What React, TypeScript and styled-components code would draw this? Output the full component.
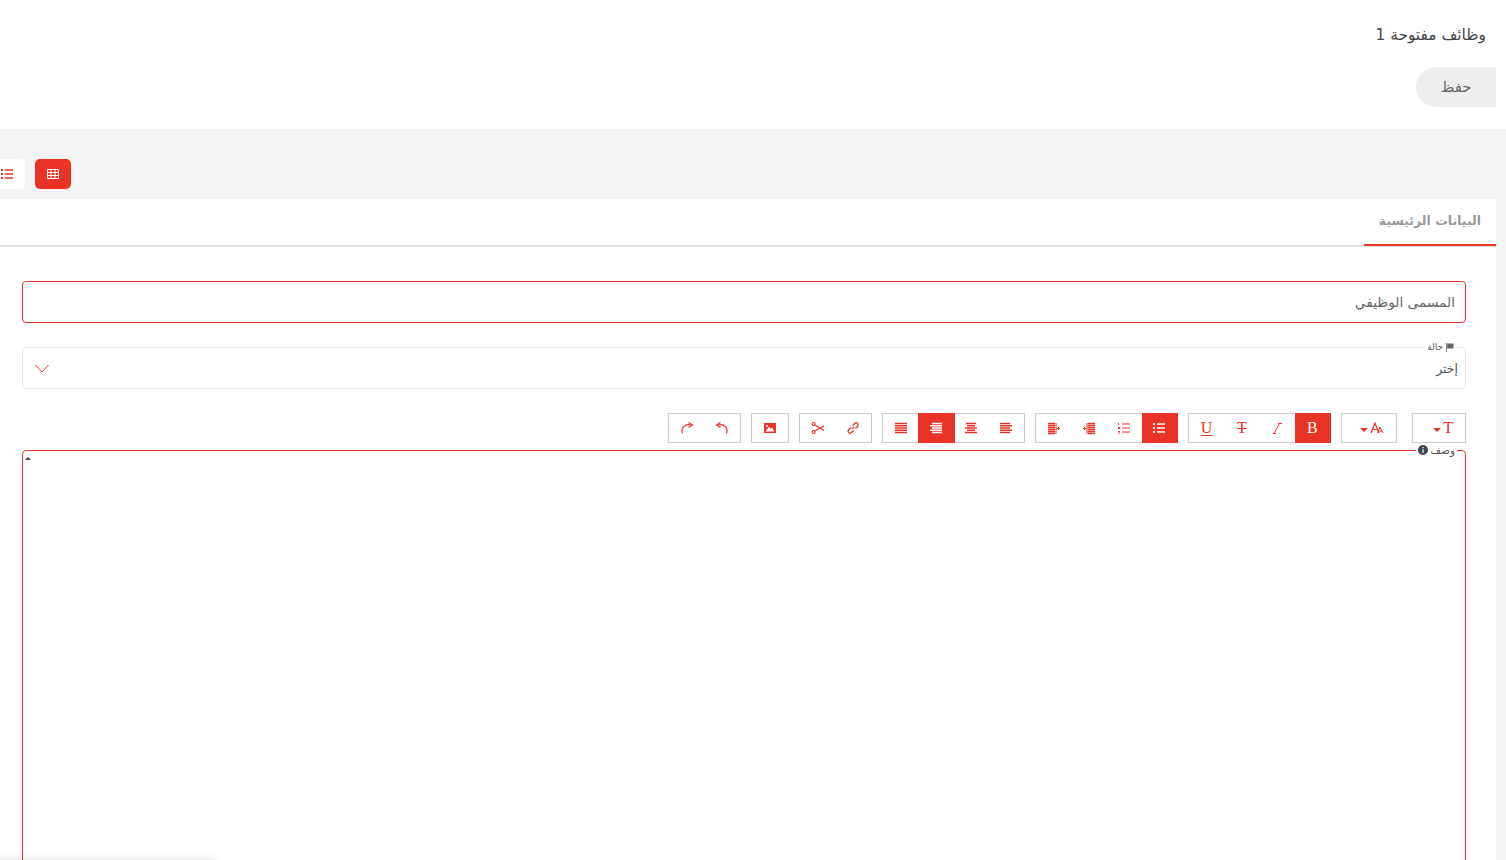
import React, { FunctionComponent, ReactNode } from 'react';
import styled, { createGlobalStyle } from 'styled-components';

const RED = '#ea3327';
const FONT = '"DejaVu Sans", "Noto Sans", sans-serif';

const GlobalStyle = createGlobalStyle`
	html, body {
		margin: 0;
		height: 100%;
		overflow: hidden;
		background: #f4f4f4;
	}
	* {
		box-sizing: border-box;
	}
`;

const Page = styled.div`
	direction: rtl;
	height: 860px;
	overflow: hidden;
	position: relative;
	font-family: ${FONT};
	color: #555;
`;

const Header = styled.header`
	background: #fff;
	height: 129px;
	padding: 25px 10px 0 0;
	display: flex;
	flex-direction: column;
	align-items: flex-start;
`;

const Title = styled.h1`
	margin: 0 10px 0 0;
	font-size: 15.4px;
	line-height: 21px;
	font-weight: 400;
	color: #444;
`;

const SaveButton = styled.button`
	margin-top: 21px;
	width: 80px;
	height: 40px;
	border: 0;
	border-radius: 20px 0 0 20px;
	background: #eee;
	color: #666;
	font-family: ${FONT};
	font-size: 15px;
	padding: 0;
`;

const ViewBar = styled.div`
	direction: ltr;
	height: 70px;
	padding-top: 30px;
	margin-left: -11px;
	display: flex;
	gap: 10px;
	align-items: flex-start;
`;

const ViewButton = styled.button<{ $active?: boolean }>`
	width: 36px;
	height: 30px;
	border: 0;
	padding: 0;
	border-radius: 5px;
	display: flex;
	align-items: center;
	justify-content: center;
	background: ${p => (p.$active ? RED : '#fff')};
	color: ${p => (p.$active ? '#fff' : RED)};
`;

const Card = styled.section`
	background: #fff;
	margin-right: 10px;
	height: 661px;
`;

const Tabs = styled.div`
	height: 48px;
	border-bottom: 2px solid #e0e0e0;
	display: flex;
`;

const Tab = styled.div`
	width: 132px;
	height: 47px;
	border-bottom: 2px solid ${RED};
	padding: 10px 15px 0 0;
	font-size: 12.5px;
	line-height: 24px;
	font-weight: 700;
	color: #999;
	white-space: nowrap;
`;

const Form = styled.div`
	padding: 34px 30px 0 22px;
	display: flex;
	flex-direction: column;
`;

const TextInput = styled.input`
	display: block;
	width: 100%;
	height: 42px;
	border: 1px solid ${RED};
	border-radius: 4px;
	padding: 0 10px;
	font-family: ${FONT};
	font-size: 13.7px;
	outline: none;
	background: #fff;
	&::placeholder {
		color: #666;
		opacity: 1;
	}
`;

const SelectBox = styled.div`
	position: relative;
	margin-top: 24px;
	height: 42px;
	border: 1px solid #e4e4e4;
	border-radius: 4px;
	padding: 0 7px 0 12px;
	display: flex;
	align-items: center;
	justify-content: space-between;
	font-size: 12.5px;
	color: #555;
`;

const ChevronSlot = styled.span`
	display: flex;
`;

const FloatLabel = styled.span<{ $top: number; $right: number; $size: number }>`
	position: absolute;
	top: ${p => p.$top}px;
	right: ${p => p.$right}px;
	padding: 0 2px;
	background: #fff;
	display: flex;
	align-items: center;
	gap: 2px;
	font-size: ${p => p.$size}px;
	line-height: 10px;
	color: #555;
`;

const EditorBar = styled.div`
	margin-top: 24px;
	display: flex;
	gap: 10px;
`;

const ToolGroup = styled.div`
	display: flex;
	height: 30px;
	border: 1px solid #ccc;
	background: #fff;
`;

const FontSizeGroup = styled(ToolGroup)`
	margin-left: 5px;
`;

const ToolButton = styled.button<{ $active?: boolean; $width?: number }>`
	width: ${p => p.$width ?? 35.25}px;
	height: 28px;
	border: 0;
	padding: 0;
	display: flex;
	align-items: center;
	justify-content: center;
	background: ${p => (p.$active ? RED : 'transparent')};
	color: ${p => (p.$active ? '#fff' : RED)};
	box-shadow: ${p =>
		p.$active
			? `0 -1px 0 ${RED}, 0 1px 0 ${RED}, 1px 0 0 ${RED}, 1px -1px 0 ${RED}, 1px 1px 0 ${RED}`
			: 'none'};
`;

const DropButton = styled(ToolButton)`
	direction: ltr;
	justify-content: flex-end;
	gap: 2px;
	padding-right: 12px;
`;

const Letter = styled.span<{ $deco?: string }>`
	font-family: 'Liberation Serif', serif;
	font-size: 16px;
	line-height: 16px;
	text-decoration: ${p => p.$deco ?? 'none'};
	text-decoration-thickness: 1px;
	text-underline-offset: 2px;
`;

const Caret = styled.span`
	width: 0;
	height: 0;
	margin-top: 3px;
	border-left: 4px solid transparent;
	border-right: 4px solid transparent;
	border-top: 4px solid ${RED};
`;

const Editor = styled.div`
	position: relative;
	margin-top: 7px;
	height: 500px;
	border: 1px solid ${RED};
	border-radius: 4px 4px 0 0;
`;

const ResizeCaret = styled.span`
	position: absolute;
	top: 6px;
	left: 2px;
	width: 0;
	height: 0;
	border-left: 3px solid transparent;
	border-right: 3px solid transparent;
	border-bottom: 3px solid #3d4452;
`;

const BottomShadow = styled.div`
	position: absolute;
	left: -10px;
	bottom: -20px;
	width: 225px;
	height: 20px;
	box-shadow: 0 0 8px rgba(0, 0, 0, 0.14);
`;

/* small icon drawings, 14x14 box */
const Svg: FunctionComponent<{ children: ReactNode; size?: number }> = ({ children, size = 14 }) => (
	<svg width={size} height={size} viewBox='0 0 14 14' fill='none' stroke='currentColor' strokeWidth='1'>
		{children}
	</svg>
);

const Rows: FunctionComponent<{ rows: [number, number][] }> = ({ rows }) => (
	<Svg>
		{rows.map(([from, to], i) => (
			<path key={i} d={`M${from} ${2.5 + i * 2.25}H${to}`} strokeWidth='1.5' />
		))}
	</Svg>
);

const AlignJustify = () => <Rows rows={[[1, 13], [1, 13], [1, 13], [1, 13], [1, 13]]} />;
const AlignRight = () => <Rows rows={[[3, 13], [1, 13], [3, 13], [1, 13], [3, 13]]} />;
const AlignCenter = () => <Rows rows={[[2, 12], [3, 11], [1, 13], [3, 11], [1, 13]]} />;
const AlignLeft = () => <Rows rows={[[1, 11], [1, 13], [1, 11], [1, 13], [1, 11]]} />;

const ListBullet = () => (
	<Svg>
		<path d='M5 3H13M5 7H13M5 11H13' strokeWidth='1.4' />
		<path d='M1 3H3M1 7H3M1 11H3' strokeWidth='1.8' />
	</Svg>
);

const ListNumber = () => (
	<Svg>
		<path d='M5 3H13M5 7H13M5 11H13' strokeWidth='1.2' />
		<path d='M1.5 2V4M1 6.5H3V7.5H1V8M1 10.5H3M1 12H3' strokeWidth='0.9' />
	</Svg>
);

const IndentLeft = () => (
	<Svg>
		<path d='M1 2.5H8M1 4.5H8M1 6.5H8M1 8.5H8M1 10.5H8M1 12.5H8' strokeWidth='1.3' />
		<path d='M9 2V13' />
		<path d='M9 7.5H13M11.5 6V9' />
	</Svg>
);

const IndentRight = () => (
	<Svg>
		<path d='M6 2.5H13M6 4.5H13M6 6.5H13M6 8.5H13M6 10.5H13M6 12.5H13' strokeWidth='1.3' />
		<path d='M5 2V13' />
		<path d='M1 7.5H5M2.5 6V9' />
	</Svg>
);

const Italic = () => (
	<Svg>
		<path d='M4 12.5L9.5 2.5M3 12.5H6M8 2.5H12' />
	</Svg>
);

const FontSizeIcon = () => <Letter>T</Letter>;

const FontAIcon = () => (
	<Svg>
		<path d='M1 12L5 2L9 12M2.5 8.5H7.5' strokeWidth='1.2' />
		<path d='M7.5 12L10 6L13 12M8.5 10H12' />
	</Svg>
);

const Picture = () => (
	<Svg>
		<path
			d='M1 2H13V12H1Z M2.5 10.5H11.5L9 6.5L7.5 8L6 5.5Z M4 4a1 1 0 1 0 .01 0Z'
			fill='currentColor'
			stroke='none'
			fillRule='evenodd'
		/>
	</Svg>
);

const Scissors = () => (
	<Svg>
		<circle cx='2.6' cy='3' r='1.5' strokeWidth='1.2' />
		<circle cx='2.6' cy='11' r='1.5' strokeWidth='1.2' />
		<path d='M4 4L13 9.5M4 10L13 5' strokeWidth='1.3' />
	</Svg>
);

const LinkIcon = () => (
	<Svg>
		<path d='M6 8L8 6M5 6.5L2.5 9a2 2 0 0 0 2.8 2.8L7.5 9.5M6.5 4.5L9 2.2A2 2 0 0 1 11.8 5L9.5 7.5' strokeWidth='1.3' />
	</Svg>
);

const Redo = () => (
	<Svg>
		<path d='M2.5 12.5C0.5 7 4.5 2.5 11.5 4' strokeWidth='1.2' />
		<path d='M8.5 1.5L12.5 4L8.5 6.5' strokeWidth='1.2' />
	</Svg>
);

const Undo = () => (
	<Svg>
		<path d='M11.5 12.5C13.5 7 9.5 2.5 2.5 4' strokeWidth='1.2' />
		<path d='M5.5 1.5L1.5 4L5.5 6.5' strokeWidth='1.2' />
	</Svg>
);

const GridIcon = () => (
	<Svg>
		<path d='M1.5 2.5H12.5V11.5H1.5ZM1.5 5.5H12.5M1.5 8.5H12.5M5 2.5V11.5M9 2.5V11.5' />
	</Svg>
);

const Chevron = () => (
	<svg width='14' height='9' viewBox='0 0 14 9' fill='none' stroke={RED} strokeWidth='1'>
		<path d='M0.5 1L7 8L13.5 1' />
	</svg>
);

const Flag = () => (
	<svg width='9' height='9' viewBox='0 0 9 9' fill='#666'>
		<path d='M1 0H1.8V9H1ZM2.2 0.5H8.5V5.5H2.2Z' />
	</svg>
);

const Info = () => (
	<svg width='10' height='10' viewBox='0 0 10 10'>
		<circle cx='5' cy='5' r='5' fill='#3d4452' />
		<path d='M4.4 4.2H5.6V8H4.4ZM4.4 2H5.6V3.2H4.4Z' fill='#fff' />
	</svg>
);

const App = () => (
	<Page>
		<GlobalStyle />
		<Header>
			<Title>وظائف مفتوحة 1</Title>
			<SaveButton>حفظ</SaveButton>
		</Header>
		<ViewBar>
			<ViewButton>
				<ListBullet />
			</ViewButton>
			<ViewButton $active>
				<GridIcon />
			</ViewButton>
		</ViewBar>
		<Card>
			<Tabs>
				<Tab>البيانات الرئيسية</Tab>
			</Tabs>
			<Form>
				<TextInput placeholder='المسمى الوظيفي' />
				<SelectBox>
					<FloatLabel $top={-6} $right={9} $size={9}>
						<Flag />
						حالة
					</FloatLabel>
					<span>إختر</span>
					<ChevronSlot>
						<Chevron />
					</ChevronSlot>
				</SelectBox>
				<EditorBar>
					<FontSizeGroup>
						<DropButton $width={52}>
							<Caret />
							<FontSizeIcon />
						</DropButton>
					</FontSizeGroup>
					<ToolGroup>
						<DropButton $width={54}>
							<Caret />
							<FontAIcon />
						</DropButton>
					</ToolGroup>
					<ToolGroup>
						<ToolButton $active>
							<Letter>B</Letter>
						</ToolButton>
						<ToolButton>
							<Italic />
						</ToolButton>
						<ToolButton>
							<Letter $deco='line-through'>T</Letter>
						</ToolButton>
						<ToolButton>
							<Letter $deco='underline'>U</Letter>
						</ToolButton>
					</ToolGroup>
					<ToolGroup>
						<ToolButton $active>
							<ListBullet />
						</ToolButton>
						<ToolButton>
							<ListNumber />
						</ToolButton>
						<ToolButton>
							<IndentRight />
						</ToolButton>
						<ToolButton>
							<IndentLeft />
						</ToolButton>
					</ToolGroup>
					<ToolGroup>
						<ToolButton>
							<AlignLeft />
						</ToolButton>
						<ToolButton>
							<AlignCenter />
						</ToolButton>
						<ToolButton $active>
							<AlignRight />
						</ToolButton>
						<ToolButton>
							<AlignJustify />
						</ToolButton>
					</ToolGroup>
					<ToolGroup>
						<ToolButton $width={35.5}>
							<LinkIcon />
						</ToolButton>
						<ToolButton $width={35.5}>
							<Scissors />
						</ToolButton>
					</ToolGroup>
					<ToolGroup>
						<ToolButton $width={36}>
							<Picture />
						</ToolButton>
					</ToolGroup>
					<ToolGroup>
						<ToolButton $width={35.5}>
							<Undo />
						</ToolButton>
						<ToolButton $width={35.5}>
							<Redo />
						</ToolButton>
					</ToolGroup>
				</EditorBar>
				<Editor>
					<FloatLabel $top={-6} $right={8} $size={10.5}>
						وصف
						<Info />
					</FloatLabel>
					<ResizeCaret />
				</Editor>
			</Form>
		</Card>
		<BottomShadow />
	</Page>
);

export default App;
